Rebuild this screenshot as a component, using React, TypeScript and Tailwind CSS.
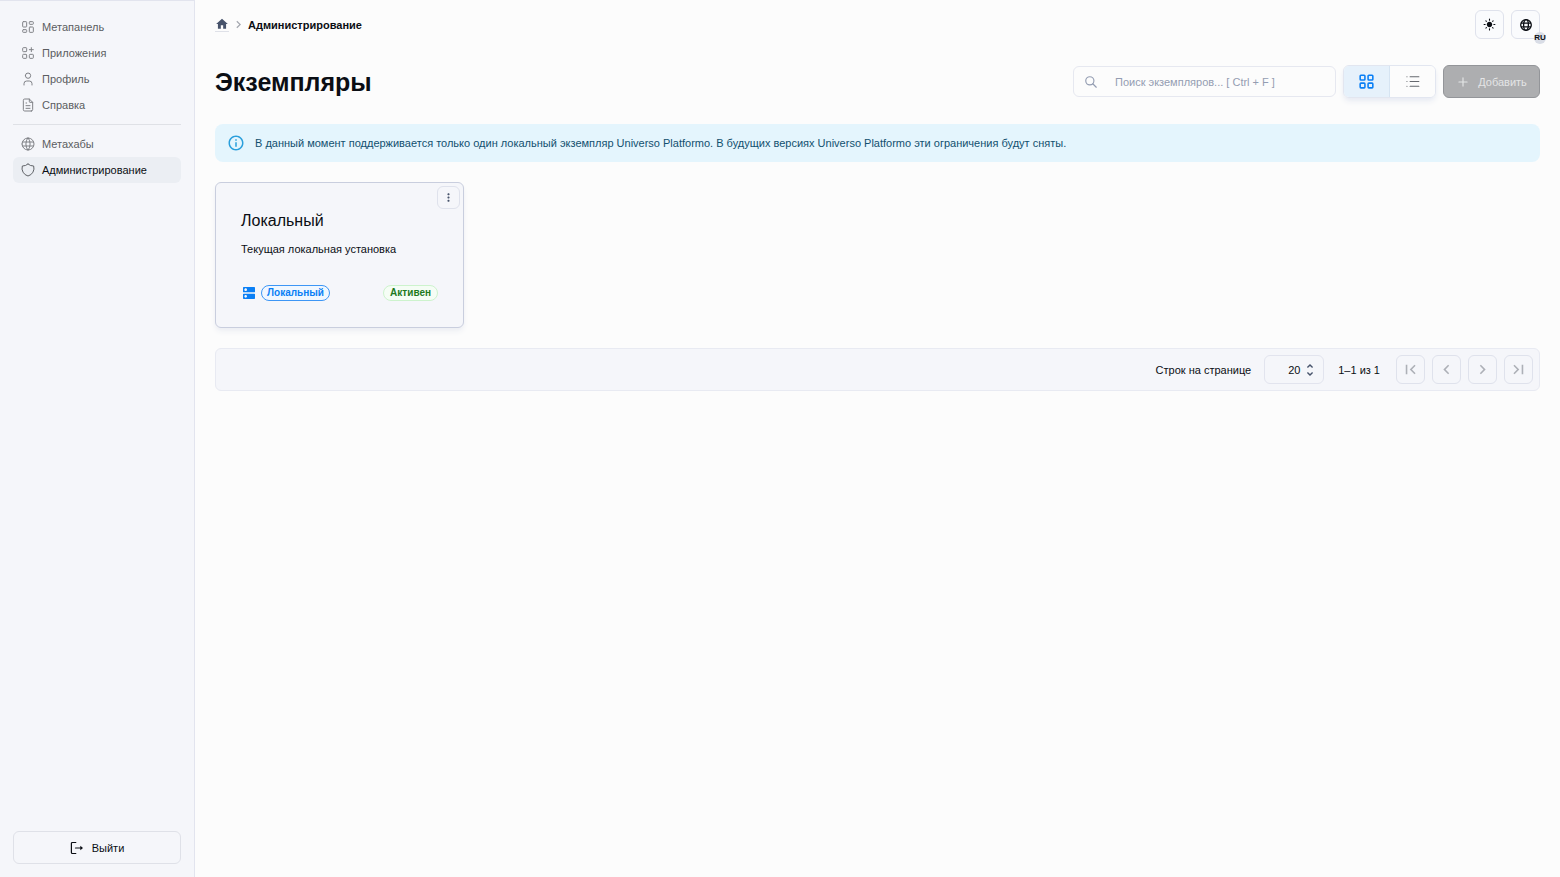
import { useState } from "react";
import type { ReactNode } from "react";
import {
  TbApps,
  TbFileText,
  TbLayoutDashboard,
  TbLayoutGrid,
  TbList,
  TbPlus,
  TbSearch,
  TbShield,
  TbUser,
  TbWorld,
} from "react-icons/tb";
import {
  MdChevronLeft,
  MdChevronRight,
  MdDns,
  MdFirstPage,
  MdHome,
  MdInfoOutline,
  MdLastPage,
  MdLightMode,
  MdMoreVert,
  MdUnfoldMore,
} from "react-icons/md";
import type { IconType } from "react-icons";
import clsx from "clsx";

type NavItem = { label: string; icon: IconType; active?: boolean };

const mainNav: NavItem[] = [
  { label: "Метапанель", icon: TbLayoutDashboard },
  { label: "Приложения", icon: TbApps },
  { label: "Профиль", icon: TbUser },
  { label: "Справка", icon: TbFileText },
];

const adminNav: NavItem[] = [
  { label: "Метахабы", icon: TbWorld },
  { label: "Администрирование", icon: TbShield, active: true },
];

function ExitIcon() {
  return (
    <svg width="14" height="14" viewBox="0 0 14 14" fill="none" aria-hidden="true">
      <path
        d="M5.8 1.5H2.4a1 1 0 0 0-1 1v9a1 1 0 0 0 1 1h3.4"
        stroke="currentColor"
        strokeWidth="1.2"
        strokeLinecap="round"
      />
      <path d="M5.5 7H11" stroke="currentColor" strokeWidth="1.2" strokeLinecap="round" />
      <path d="M10.3 4.7 13 7l-2.7 2.3z" fill="currentColor" />
    </svg>
  );
}

function GlobeIcon() {
  return (
    <svg
      width="14"
      height="14"
      viewBox="0 0 14 14"
      fill="none"
      stroke="currentColor"
      strokeWidth="1.3"
      aria-hidden="true"
    >
      <circle cx="7" cy="7" r="5.3" />
      <ellipse cx="7" cy="7" rx="2.4" ry="5.3" />
      <path d="M2 5.1h10M2 8.9h10" />
    </svg>
  );
}

function NavList({ items }: { items: NavItem[] }) {
  return (
    <ul>
      {items.map(({ label, icon: Icon, active }) => (
        <li key={label}>
          <a
            href="#"
            aria-current={active ? "page" : undefined}
            className={clsx(
              "flex h-[26px] items-center gap-[6px] rounded-md px-[7px]",
              active ? "bg-[#ebeef3] text-[#0b0e14]" : "text-[#5b5d61]",
            )}
          >
            <Icon
              size={16}
              strokeWidth={1.5}
              className={active ? "text-[#5f6267]" : "text-[#808287]"}
            />
            {label}
          </a>
        </li>
      ))}
    </ul>
  );
}

function Sidebar() {
  return (
    <aside className="flex w-[195px] shrink-0 flex-col border-t border-r border-[#e2e4ee] bg-[#f5f6fa] px-[13px] pt-[13px] pb-[13px]">
      <nav>
        <NavList items={mainNav} />
        <hr className="my-[6px] border-[#dfe1e6]" />
        <NavList items={adminNav} />
      </nav>
      <button
        type="button"
        className="mt-auto flex h-[33px] items-center justify-center gap-2 rounded-md border border-[#dfe1e8] text-[#0b0e14]"
      >
        <ExitIcon />
        Выйти
      </button>
    </aside>
  );
}

function IconButton({
  label,
  disabled,
  children,
}: {
  label: string;
  disabled?: boolean;
  children: ReactNode;
}) {
  return (
    <button
      type="button"
      aria-label={label}
      disabled={disabled}
      className="relative flex size-[29px] shrink-0 items-center justify-center rounded-md border border-[#dfe2ec] bg-[#fafbfd] text-[#0b0e14] disabled:bg-transparent disabled:text-[#adb0b7]"
    >
      {children}
    </button>
  );
}

function TopBar() {
  return (
    <header className="flex items-center justify-between">
      <nav aria-label="breadcrumb" className="flex items-center gap-[2px]">
        <a href="#" aria-label="Главная" className="border-b border-[#dfe1e8] text-[#47536b]">
          <MdHome size={14} />
        </a>
        <MdChevronRight size={15} className="text-[#a5a8b0]" />
        <span className="font-bold text-[#0b0e14]">Администрирование</span>
      </nav>
      <div className="flex gap-[7px]">
        <IconButton label="Тема">
          <MdLightMode size={13} />
        </IconButton>
        <IconButton label="Язык">
          <GlobeIcon />
          <span className="absolute -right-[7px] -bottom-[6px] flex size-3 items-center justify-center rounded-full bg-[#d9dde6] text-[8px] font-bold">
            RU
          </span>
        </IconButton>
      </div>
    </header>
  );
}

function Toolbar() {
  const [view, setView] = useState<"card" | "list">("card");

  return (
    <div className="mt-[26px] flex items-center gap-[7px]">
      <h1 className="mr-auto text-[25px] leading-8 font-bold text-[#0b0e14]">Экземпляры</h1>
      <label className="flex h-[31px] w-[263px] items-center gap-[17px] rounded-md border border-[#e6e8f0] px-[10px] text-[#949db2]">
        <TbSearch size={14} />
        <input
          type="search"
          aria-label="Поиск экземпляров"
          placeholder="Поиск экземпляров... [ Ctrl + F ]"
          className="min-w-0 flex-1 bg-transparent outline-none placeholder:text-[#949db2]"
        />
      </label>
      <div className="flex h-[33px] overflow-hidden rounded-md border border-[#e2e6f0] shadow-md shadow-[#e8ebf3]">
        <button
          type="button"
          aria-label="Карточки"
          aria-pressed={view === "card"}
          onClick={() => setView("card")}
          className="flex w-[46px] items-center justify-center border-r border-[#d6e4f2] bg-[#e6f1fb] text-[#0a7ff5]"
        >
          <TbLayoutGrid size={19} />
        </button>
        <button
          type="button"
          aria-label="Список"
          aria-pressed={view === "list"}
          onClick={() => setView("list")}
          className="flex w-[45px] items-center justify-center bg-[#fcfcfc] text-[#66696f]"
        >
          <TbList size={19} strokeWidth={1.5} />
        </button>
      </div>
      <button
        type="button"
        disabled
        className="flex h-[33px] w-[97px] items-center justify-center gap-2 rounded-md border border-[#939599] bg-[#adaeb0] text-[#e4e5e6]"
      >
        <TbPlus size={14} />
        Добавить
      </button>
    </div>
  );
}

function InstanceCard() {
  return (
    <article className="relative w-[249px] rounded-md border border-[#c9cede] bg-[#f5f6fa] px-[25px] pt-[26px] pb-[26px] shadow-md shadow-[#eceef3]">
      <button
        type="button"
        aria-label="Действия"
        className="absolute top-[3px] right-[3px] flex size-[23px] items-center justify-center rounded-md border border-[#dfe2ec] text-[#47536b]"
      >
        <MdMoreVert size={13} />
      </button>
      <h2 className="text-base leading-6">Локальный</h2>
      <p className="mt-2 leading-4">Текущая локальная установка</p>
      <div className="mt-[28px] flex items-center gap-1">
        <MdDns size={16} className="text-[#0a7ff5]" />
        <span className="rounded-full border border-[#3d96f5] bg-[#f0f7ff] px-[5px] text-[10px] leading-[14px] font-bold text-[#0a7ff5]">
          Локальный
        </span>
        <span className="ml-auto rounded-full border border-[#cdf3cd] bg-[#f5fdf5] px-[6px] text-[10px] leading-[14px] font-bold text-[#1f7a1f]">
          Активен
        </span>
      </div>
    </article>
  );
}

function Pagination() {
  return (
    <footer className="mt-5 flex h-[43px] items-center justify-end rounded-md border border-[#e8eaf2] bg-[#f5f6fa] pr-[6px]">
      <label htmlFor="page-size">Строк на странице</label>
      <div className="relative ml-[13px]">
        <select
          id="page-size"
          defaultValue="20"
          className="h-[29px] w-[60px] appearance-none rounded-md border border-[#e2e4ee] bg-transparent pl-[23px]"
        >
          <option>10</option>
          <option>20</option>
          <option>50</option>
        </select>
        <MdUnfoldMore
          size={16}
          className="pointer-events-none absolute top-[7px] right-[6px] text-[#47536b]"
        />
      </div>
      <span className="mr-4 ml-[14px]">1–1 из 1</span>
      <div className="flex gap-[7px]">
        <IconButton label="Первая страница" disabled>
          <MdFirstPage size={19} />
        </IconButton>
        <IconButton label="Предыдущая страница" disabled>
          <MdChevronLeft size={19} />
        </IconButton>
        <IconButton label="Следующая страница" disabled>
          <MdChevronRight size={19} />
        </IconButton>
        <IconButton label="Последняя страница" disabled>
          <MdLastPage size={19} />
        </IconButton>
      </div>
    </footer>
  );
}

export default function App() {
  return (
    <div className="flex min-h-screen bg-[#fcfcfc] font-['Liberation_Sans',Arial,sans-serif] text-[11px] leading-4 text-[#0b0e14]">
      <Sidebar />
      <main className="min-w-0 flex-1 px-5 pt-[10px]">
        <TopBar />
        <Toolbar />
        <div
          role="status"
          className="mt-[26px] flex h-[38px] items-center gap-[10px] rounded-lg bg-[#e4f5fd] px-3 text-[#12506f]"
        >
          <MdInfoOutline size={18} className="shrink-0 text-[#2a9fdc]" />
          <p>
            В данный момент поддерживается только один локальный экземпляр Universo Platformo. В
            будущих версиях Universo Platformo эти ограничения будут сняты.
          </p>
        </div>
        <section className="mt-5 flex flex-wrap gap-5">
          <InstanceCard />
        </section>
        <Pagination />
      </main>
    </div>
  );
}
